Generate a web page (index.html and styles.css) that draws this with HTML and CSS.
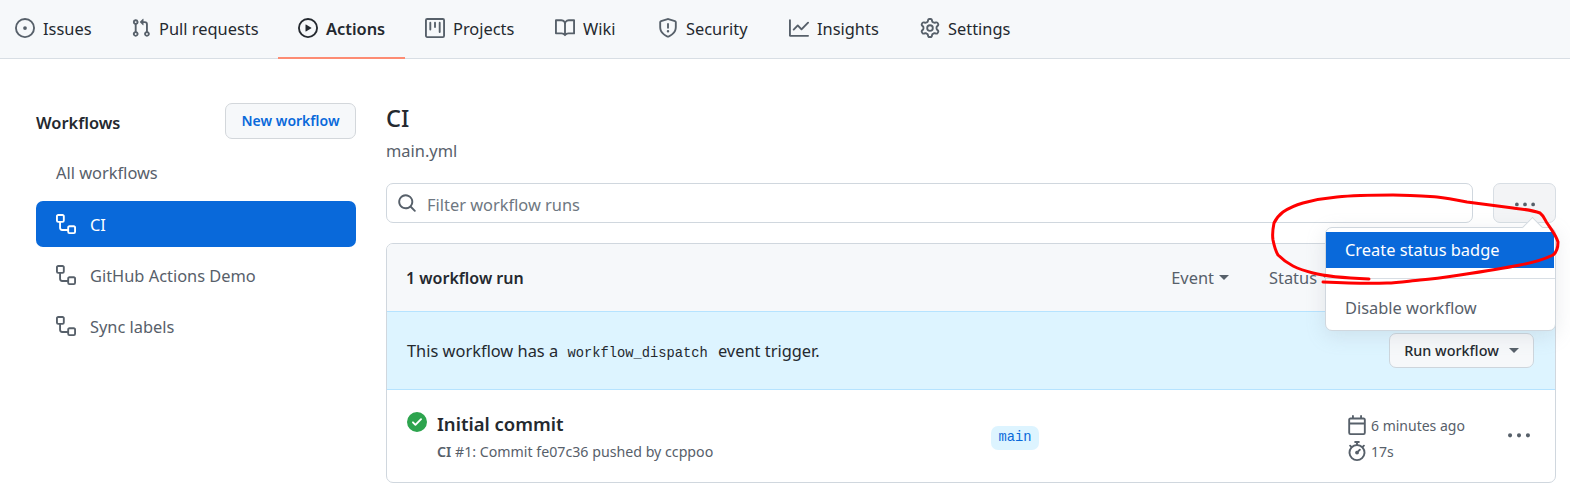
FILE: index.html
```html
<!DOCTYPE html>
<html lang="en">
<head>
<meta charset="utf-8">
<title>Actions</title>
<link rel="stylesheet" href="styles.css">
</head>
<body>
<svg class="sprite" width="0" height="0" aria-hidden="true">
  <defs>
    <symbol id="i-workflow" viewBox="0 0 16 16"><path fill-rule="evenodd" d="M0 1.75C0 .784.784 0 1.75 0h3.5C6.216 0 7 .784 7 1.75v3.5A1.75 1.75 0 015.25 7H4v4a1 1 0 001 1h4v-1.25C9 9.784 9.784 9 10.75 9h3.5c.966 0 1.75.784 1.75 1.75v3.5A1.75 1.75 0 0114.25 16h-3.5A1.75 1.75 0 019 14.25V13.5H5A2.5 2.5 0 012.5 11V7h-.75A1.75 1.75 0 010 5.25v-3.5zm1.75-.25a.25.25 0 00-.25.25v3.5c0 .138.112.25.25.25h3.5a.25.25 0 00.25-.25v-3.5a.25.25 0 00-.25-.25h-3.5zm9 9a.25.25 0 00-.25.25v3.5c0 .138.112.25.25.25h3.5a.25.25 0 00.25-.25v-3.5a.25.25 0 00-.25-.25h-3.5z"/></symbol>
    <symbol id="i-kebab" viewBox="0 0 16 16"><path d="M8 9a1.5 1.5 0 100-3 1.5 1.5 0 000 3zM1.5 9a1.5 1.5 0 100-3 1.5 1.5 0 000 3zm13 0a1.5 1.5 0 100-3 1.5 1.5 0 000 3z"/></symbol>
  </defs>
</svg>

<nav class="tabs">
  <a class="tab tab-first"><svg class="icon" viewBox="0 0 16 16"><path d="M8 9.5a1.5 1.5 0 100-3 1.5 1.5 0 000 3z"/><path fill-rule="evenodd" d="M8 0a8 8 0 100 16A8 8 0 008 0zM1.5 8a6.5 6.5 0 1113 0 6.5 6.5 0 01-13 0z"/></svg><span>Issues</span></a>
  <a class="tab"><svg class="icon" viewBox="0 0 16 16"><path fill-rule="evenodd" d="M7.177 3.073L9.573.677A.25.25 0 0110 .854v4.792a.25.25 0 01-.427.177L7.177 3.427a.25.25 0 010-.354zM3.75 2.5a.75.75 0 100 1.5.75.75 0 000-1.5zm-2.25.75a2.25 2.25 0 113 2.122v5.256a2.251 2.251 0 11-1.5 0V5.372A2.25 2.25 0 011.5 3.25zM11 2.5h-1V4h1a1 1 0 011 1v5.628a2.251 2.251 0 101.5 0V5A2.5 2.5 0 0011 2.5zm1 10.25a.75.75 0 111.5 0 .75.75 0 01-1.5 0zM3.75 12a.75.75 0 100 1.5.75.75 0 000-1.5z"/></svg><span>Pull requests</span></a>
  <a class="tab tab-active"><svg class="icon" viewBox="0 0 16 16"><path fill-rule="evenodd" d="M1.5 8a6.5 6.5 0 1113 0 6.5 6.5 0 01-13 0zM8 0a8 8 0 100 16A8 8 0 008 0zM6.379 5.227A.25.25 0 006 5.442v5.117a.25.25 0 00.379.214l4.264-2.559a.25.25 0 000-.428L6.379 5.227z"/></svg><span>Actions</span></a>
  <a class="tab"><svg class="icon" viewBox="0 0 16 16"><path fill-rule="evenodd" d="M1.75 0A1.75 1.75 0 000 1.75v12.5C0 15.216.784 16 1.75 16h12.5A1.75 1.75 0 0016 14.25V1.75A1.75 1.75 0 0014.25 0H1.75zM1.5 1.75a.25.25 0 01.25-.25h12.5a.25.25 0 01.25.25v12.5a.25.25 0 01-.25.25H1.75a.25.25 0 01-.25-.25V1.75zM11.75 3a.75.75 0 00-.75.75v7.5a.75.75 0 001.5 0v-7.5a.75.75 0 00-.75-.75zm-8.25.75a.75.75 0 011.5 0v5.5a.75.75 0 01-1.5 0v-5.5zM8 3a.75.75 0 00-.75.75v3.5a.75.75 0 001.5 0v-3.5A.75.75 0 008 3z"/></svg><span>Projects</span></a>
  <a class="tab"><svg class="icon" viewBox="0 0 16 16"><path fill-rule="evenodd" d="M0 1.75A.75.75 0 01.75 1h4.253c1.227 0 2.317.59 3 1.501A3.744 3.744 0 0111.006 1h4.245a.75.75 0 01.75.75v10.5a.75.75 0 01-.75.75h-4.507a2.25 2.25 0 00-1.591.659l-.622.621a.75.75 0 01-1.06 0l-.622-.621A2.25 2.25 0 005.258 13H.75a.75.75 0 01-.75-.75V1.75zm8.755 3a2.25 2.25 0 012.25-2.25H14.5v9h-3.757c-.71 0-1.4.201-1.992.572l.004-7.322zm-1.504 7.324l.004-5.073-.002-2.253A2.25 2.25 0 005.003 2.5H1.5v9h3.757a3.75 3.75 0 011.994.574z"/></svg><span>Wiki</span></a>
  <a class="tab"><svg class="icon" viewBox="0 0 16 16"><path fill-rule="evenodd" d="M7.467.133a1.75 1.75 0 011.066 0l5.25 1.68A1.75 1.75 0 0115 3.48V7c0 1.566-.32 3.182-1.303 4.682-.983 1.498-2.585 2.813-5.032 3.855a1.7 1.7 0 01-1.33 0c-2.447-1.042-4.049-2.357-5.032-3.855C1.32 10.182 1 8.566 1 7V3.48a1.75 1.75 0 011.217-1.667l5.25-1.68zm.61 1.429a.25.25 0 00-.153 0l-5.25 1.68a.25.25 0 00-.174.238V7c0 1.358.275 2.666 1.057 3.86.784 1.194 2.121 2.34 4.366 3.297a.2.2 0 00.154 0c2.245-.956 3.582-2.104 4.366-3.298C13.225 9.666 13.5 8.36 13.5 7V3.48a.25.25 0 00-.174-.237l-5.25-1.68zM9 10.5a1 1 0 11-2 0 1 1 0 012 0zm-.25-5.75a.75.75 0 10-1.5 0v3a.75.75 0 001.5 0v-3z"/></svg><span>Security</span></a>
  <a class="tab"><svg class="icon" viewBox="0 0 16 16"><path fill-rule="evenodd" d="M1.5 1.75a.75.75 0 00-1.5 0v12.5c0 .414.336.75.75.75h14.5a.75.75 0 000-1.5H1.5V1.75zm14.28 2.53a.75.75 0 00-1.06-1.06L10 7.94 7.53 5.47a.75.75 0 00-1.06 0L3.22 8.72a.75.75 0 001.06 1.06L7 7.06l2.47 2.47a.75.75 0 001.06 0l5.25-5.25z"/></svg><span>Insights</span></a>
  <a class="tab"><svg class="icon" viewBox="0 0 16 16"><path fill-rule="evenodd" d="M7.429 1.525a6.593 6.593 0 011.142 0c.036.003.108.036.137.146l.289 1.105c.147.56.55.967.997 1.189.174.086.341.183.501.29.417.278.97.423 1.53.27l1.102-.303c.11-.03.175.016.195.046.219.31.41.641.573.989.014.031.022.11-.059.19l-.815.806c-.411.406-.562.957-.53 1.456a4.588 4.588 0 010 .582c-.032.499.119 1.05.53 1.456l.815.806c.08.08.073.159.059.19a6.494 6.494 0 01-.573.99c-.02.029-.086.074-.195.045l-1.103-.303c-.559-.153-1.112-.008-1.529.27-.16.107-.327.204-.5.29-.449.222-.851.628-.998 1.189l-.289 1.105c-.029.11-.101.143-.137.146a6.613 6.613 0 01-1.142 0c-.036-.003-.108-.037-.137-.146l-.289-1.105c-.147-.56-.55-.967-.997-1.189a4.502 4.502 0 01-.501-.29c-.417-.278-.97-.423-1.53-.27l-1.102.303c-.11.03-.175-.016-.195-.046a6.492 6.492 0 01-.573-.989c-.014-.031-.022-.11.059-.19l.815-.806c.411-.406.562-.957.53-1.456a4.587 4.587 0 010-.582c.032-.499-.119-1.05-.53-1.456l-.815-.806c-.08-.08-.073-.159-.059-.19a6.44 6.44 0 01.573-.99c.02-.029.086-.075.195-.045l1.103.303c.559.153 1.112.008 1.529-.27.16-.107.327-.204.5-.29.449-.222.851-.628.998-1.189l.289-1.105c.029-.11.101-.143.137-.146zM8 0c-.236 0-.47.01-.701.03-.743.065-1.29.615-1.458 1.261l-.29 1.106c-.017.066-.078.158-.211.224a5.994 5.994 0 00-.668.386c-.123.082-.233.09-.3.071L3.27 2.776c-.644-.177-1.392.02-1.82.63a7.977 7.977 0 00-.704 1.217c-.315.675-.111 1.422.363 1.891l.815.806c.05.048.098.147.088.294a6.084 6.084 0 000 .772c.01.147-.038.246-.088.294l-.815.806c-.474.469-.678 1.216-.363 1.891.2.428.436.835.704 1.218.428.609 1.176.806 1.82.63l1.103-.303c.066-.019.176-.011.299.071.213.143.436.272.668.386.133.066.194.158.212.224l.289 1.106c.169.646.715 1.196 1.458 1.26a8.094 8.094 0 001.402 0c.743-.064 1.29-.614 1.458-1.26l.29-1.106c.017-.066.078-.158.211-.224a5.98 5.98 0 00.668-.386c.123-.082.233-.09.3-.071l1.102.302c.644.177 1.392-.02 1.82-.63.268-.382.505-.789.704-1.217.315-.675.111-1.422-.364-1.891l-.814-.806c-.05-.048-.098-.147-.088-.294a6.1 6.1 0 000-.772c-.01-.147.039-.246.088-.294l.814-.806c.475-.469.679-1.216.364-1.891a7.992 7.992 0 00-.704-1.218c-.428-.609-1.176-.806-1.82-.63l-1.103.303c-.066.019-.176.011-.299-.071a5.991 5.991 0 00-.668-.386c-.133-.066-.194-.158-.212-.224L10.16 1.29C9.99.645 9.444.095 8.701.031A8.094 8.094 0 008 0zm1.5 8a1.5 1.5 0 11-3 0 1.5 1.5 0 013 0zM11 8a3 3 0 11-6 0 3 3 0 016 0z"/></svg><span>Settings</span></a>
</nav>

<div class="page">
  <aside class="sidebar">
    <div class="side-head">
      <h2 class="side-title">Workflows</h2>
      <a class="btn-new">New workflow</a>
    </div>
    <a class="side-item side-plain">All workflows</a>
    <a class="side-item side-selected"><svg class="icon"><use href="#i-workflow"/></svg><span>CI</span></a>
    <a class="side-item"><svg class="icon"><use href="#i-workflow"/></svg><span>GitHub Actions Demo</span></a>
    <a class="side-item"><svg class="icon"><use href="#i-workflow"/></svg><span>Sync labels</span></a>
  </aside>

  <main class="main">
    <h1 class="title">CI</h1>
    <div class="subtitle">main.yml</div>
    <div class="filter-row">
      <div class="filter">
        <svg class="icon icon-search" viewBox="0 0 16 16"><path fill-rule="evenodd" d="M11.5 7a4.499 4.499 0 11-8.998 0A4.499 4.499 0 0111.5 7zm-.82 4.74a6 6 0 111.06-1.06l3.04 3.04a.75.75 0 11-1.06 1.06l-3.04-3.04z"/></svg>
        <span>Filter workflow runs</span>
      </div>
      <button class="more"><svg class="icon"><use href="#i-kebab"/></svg></button>
    </div>

    <section class="box">
      <header class="box-head">
        <strong>1 workflow run</strong>
        <div class="filters">
          <span class="drop">Event<i class="caret"></i></span>
          <span class="drop">Status<i class="caret"></i></span>
        </div>
      </header>
      <div class="banner">
        <p class="banner-text">This workflow has a <code>workflow_dispatch</code> event trigger.</p>
        <button class="btn-run">Run workflow<i class="caret"></i></button>
      </div>
      <div class="run">
        <svg class="icon icon-ok" viewBox="0 0 16 16"><path fill-rule="evenodd" d="M8 16A8 8 0 108 0a8 8 0 000 16zm3.78-9.72a.75.75 0 00-1.06-1.06L6.75 9.19 5.28 7.72a.75.75 0 00-1.06 1.06l2 2a.75.75 0 001.06 0l4.5-4.5z"/></svg>
        <div class="run-main">
          <div class="run-title">Initial commit</div>
          <div class="run-meta"><b>CI</b> #1: Commit fe07c36 pushed by ccppoo</div>
        </div>
        <div class="run-branch"><span class="pill">main</span></div>
        <div class="run-times">
          <div class="time"><svg class="icon" viewBox="0 0 16 16"><path fill-rule="evenodd" d="M4.75 0a.75.75 0 01.75.75V2h5V.75a.75.75 0 011.5 0V2h1.25c.966 0 1.75.784 1.75 1.75v10.5A1.75 1.75 0 0113.25 16H2.75A1.75 1.75 0 011 14.25V3.75C1 2.784 1.784 2 2.75 2H4V.75A.75.75 0 014.75 0zm0 3.5h8.5a.25.25 0 01.25.25V6h-11V3.75a.25.25 0 01.25-.25h2zm-2.25 4v6.75c0 .138.112.25.25.25h10.5a.25.25 0 00.25-.25V7.5h-11z"/></svg><span>6 minutes ago</span></div>
          <div class="time"><svg class="icon" viewBox="0 0 16 16"><path fill-rule="evenodd" d="M5.75.75A.75.75 0 016.5 0h3a.75.75 0 010 1.5h-.75v1l-.001.041a6.718 6.718 0 013.464 1.435l.007-.006.75-.75a.75.75 0 111.06 1.06l-.75.75-.006.007a6.75 6.75 0 11-10.548 0L2.72 5.03l-.75-.75a.75.75 0 011.06-1.06l.75.75.007.006A6.718 6.718 0 017.25 2.541a.756.756 0 010-.041v-1H6.5a.75.75 0 01-.75-.75zM8 14.5A5.25 5.25 0 108 4a5.25 5.25 0 000 10.5zm.389-6.7l1.33-1.33a.75.75 0 111.061 1.06L9.45 8.861A1.502 1.502 0 018 10.75a1.5 1.5 0 11.389-2.95z"/></svg><span>17s</span></div>
        </div>
        <svg class="icon icon-runmore"><use href="#i-kebab"/></svg>
      </div>
    </section>
  </main>
</div>

<div class="menu">
  <div class="menu-item menu-hot">Create status badge</div>
  <div class="menu-sep"></div>
  <div class="menu-item menu-plain">Disable workflow</div>
</div>

<svg class="scribble" viewBox="0 0 1570 493" aria-hidden="true"><path d="M1369 279C1345 278 1328 277 1313 273C1305 271 1299 269 1293 266C1287 263 1282 259 1278 255C1275 250 1274 245 1273 240C1272 234 1273 228 1274 223C1276 219 1279 215 1283 212C1289 208 1296 205 1303 203C1314 200 1325 198 1337 197C1356 195 1374 195 1393 195C1408 195 1422 196 1437 197C1447 198 1457 200 1467 202C1482 204 1498 206 1513 208C1522 209 1532 210 1540 213C1544 216 1545 220 1547 223C1551 229 1556 235 1558 242C1558 248 1557 252 1553 255C1543 260 1531 263 1520 265C1500 269 1480 272 1460 275C1447 277 1433 279 1420 280C1409 281 1398 283 1387 283C1366 284 1344 283 1323 282"/></svg>
</body>
</html>
```

FILE: styles.css
```css
* { box-sizing: border-box; }
html, body { margin: 0; padding: 0; }
body {
  width: 1570px;
  height: 493px;
  overflow: hidden;
  position: relative;
  background: #fff;
  color: #24292f;
  font-family: "Noto Sans", "Open Sans", sans-serif;
  font-size: 16.4px;
}
.sprite { position: absolute; }
.icon { width: 20px; height: 20px; fill: #57606a; flex: none; display: block; }

.tabs {
  display: grid;
  grid-template-columns: 111px 167px 127px 130px 103px 131px 131px 150px;
  height: 59px;
  background: #f6f8fa;
  border-bottom: 1px solid #d8dee4;
}
.tab {
  display: flex;
  align-items: center;
  gap: 8px;
  height: 59px;
  padding: 0 0 1px 20px;
  margin-bottom: -1px;
  border-bottom: 2px solid transparent;
}
.tab-first { padding-left: 15px; }
.tab-active { font-weight: 600; border-bottom-color: #fd8c73; }
.tab-active .icon { fill: #24292f; }

.page { display: flex; padding: 43px 14px 0 36px; gap: 30px; }

.sidebar { width: 320px; flex: none; padding-top: 1px; }
.side-head { display: flex; justify-content: space-between; align-items: center; height: 36px; margin-bottom: 11px; }
.side-title { margin: 0; padding-top: 2px; font-size: 16.4px; font-weight: 600; }
.btn-new {
  display: block;
  width: 131px;
  height: 36px;
  line-height: 34px;
  text-align: center;
  font-size: 14px;
  font-weight: 600;
  color: #0969da;
  background: #f6f8fa;
  border: 1px solid #d3d7db;
  border-radius: 7px;
}
.side-item {
  display: flex;
  align-items: center;
  gap: 14px;
  height: 46px;
  margin-bottom: 5px;
  padding-left: 20px;
  border-radius: 7px;
  color: #57606a;
}
.side-plain { padding-bottom: 2px; }
.side-selected { background: #0969da; color: #fff; }
.side-selected .icon { fill: #fff; }

.main { flex: 1; min-width: 0; }
.title { margin: 0; height: 32px; line-height: 32px; font-size: 23.5px; font-weight: 500; }
.subtitle { height: 24px; line-height: 24px; margin-top: 5px; color: #57606a; }
.filter-row { display: flex; gap: 20px; margin-top: 20px; }
.filter {
  flex: 1;
  height: 40px;
  display: flex;
  align-items: center;
  gap: 10px;
  padding-left: 10px;
  border: 1px solid #d0d7de;
  border-radius: 7px;
  color: #6e7781;
}
.filter span { padding-top: 2px; }
.more {
  width: 63px;
  height: 40px;
  display: flex;
  align-items: center;
  justify-content: center;
  padding: 4px 0 0 0;
  background: #f3f4f6;
  border: 1px solid #d8dee4;
  border-radius: 7px;
}

.box { margin-top: 20px; border: 1px solid #d0d7de; border-radius: 7px; overflow: hidden; height: 240px; }
.box-head {
  height: 67px;
  display: flex;
  align-items: center;
  justify-content: space-between;
  padding: 0 20px 0 19px;
  background: #f6f8fa;
}
.box-head strong { font-weight: 600; font-size: 16px; }
.filters { display: flex; gap: 40px; margin-right: 203px; color: #57606a; }
.drop { display: flex; align-items: center; gap: 5px; }
.caret {
  display: block;
  width: 0;
  height: 0;
  border-top: 5px solid #57606a;
  border-left: 5px solid transparent;
  border-right: 5px solid transparent;
}
.banner {
  height: 79px;
  display: flex;
  align-items: center;
  justify-content: space-between;
  padding: 0 21px 2px 20px;
  background: #ddf4ff;
  border-top: 1px solid #b6e3ff;
  border-bottom: 1px solid #b6e3ff;
}
.banner-text { margin: 0; padding-top: 1px; }
.banner-text code {
  font-family: "Liberation Mono", monospace;
  font-size: 13.75px;
  padding: 0 6px 0 5px;
}
.btn-run {
  width: 145px;
  height: 35px;
  margin-top: 1px;
  display: flex;
  align-items: center;
  justify-content: center;
  gap: 10px;
  font: 500 14.4px "Noto Sans", sans-serif;
  color: #24292f;
  background: #f6f8fa;
  border: 1px solid #cdd5dc;
  border-radius: 7px;
}

.run { height: 93px; display: flex; padding: 22px 0 0 20px; position: relative; }
.icon-ok { fill: #2da44e; }
.run-main { width: 554px; margin-left: 10px; }
.run-title { font-size: 18.5px; font-weight: 600; line-height: 24px; }
.run-meta { font-size: 14.2px; color: #57606a; line-height: 20px; margin-top: 6px; }
.run-meta b { font-weight: 600; }
.run-branch { width: 356px; padding-top: 11px; }
.pill {
  display: inline-block;
  height: 24px;
  line-height: 24px;
  padding: 0 7.5px;
  border-radius: 7px;
  background: #ddf4ff;
  color: #0969da;
  font-family: "Liberation Mono", monospace;
  font-size: 13.75px;
}
.run-times { width: 161px; color: #57606a; font-size: 14px; }
.time { display: flex; align-items: center; gap: 4px; height: 26px; }
.icon-runmore { margin-top: 13px; width: 22px; height: 22px; }

.menu {
  position: absolute;
  left: 1325px;
  top: 227px;
  width: 231px;
  height: 104px;
  padding-top: 4px;
  background: #fff;
  border: 1px solid #d0d7de;
  border-radius: 7px;
  box-shadow: 0 5px 20px rgba(140,149,159,.2);
  color: #57606a;
}
.menu::before {
  content: "";
  position: absolute;
  top: -8px;
  right: 15px;
  width: 14px;
  height: 14px;
  background: #fff;
  border-left: 1px solid #d0d7de;
  border-top: 1px solid #d0d7de;
  transform: rotate(45deg);
}
.menu-item { position: relative; height: 36px; line-height: 36px; padding-left: 19px; margin: 0 1px 0 0; }
.menu-plain { line-height: 38px; }
.menu-hot { background: #0969da; color: #fff; }
.menu-sep { height: 1px; background: #d8dee4; margin: 10px 0 10px; }

.scribble { position: absolute; left: 0; top: 0; width: 1570px; height: 493px; pointer-events: none; }
.scribble path { fill: none; stroke: #f00; stroke-width: 3; stroke-linecap: round; stroke-linejoin: round; }
```
